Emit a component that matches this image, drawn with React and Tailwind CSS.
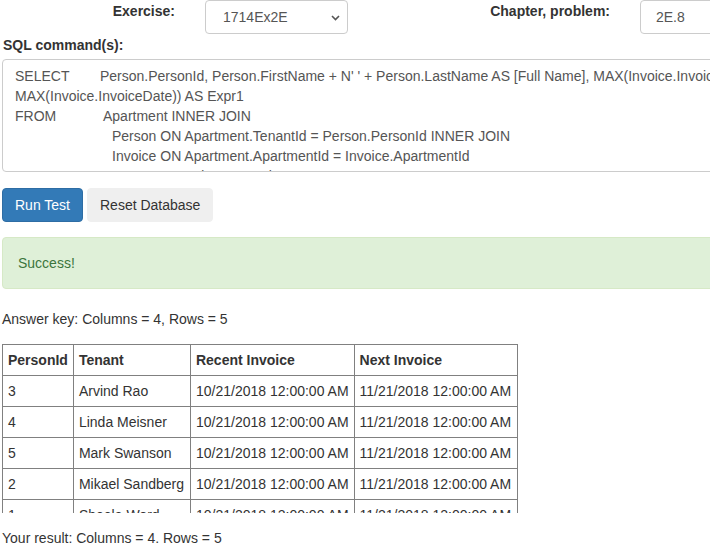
export default function App() {
  const rows = [
    ["3", "Arvind Rao"],
    ["4", "Linda Meisner"],
    ["5", "Mark Swanson"],
    ["2", "Mikael Sandberg"],
    ["1", "Sheela Word"],
  ];
  const cell = "border border-[#808080] pl-[5px] py-[5px] whitespace-nowrap text-left align-top";
  const p5 = " pr-[5px]";
  const p6 = " pr-[6px]";
  return (
    <div className="w-[710px] h-[543px] overflow-hidden bg-white text-[14px] leading-[20px] text-[#333] font-['Liberation_Sans',Arial,sans-serif]">
      <div className="w-[1000px] pl-[2px]">
        <div className="flex items-start h-[34px]">
          <div className="w-[173px] text-right font-bold pt-[1px]">Exercise:</div>
          <div className="relative ml-[30px] w-[143px] h-[34px] border border-[#ccc] rounded-[4px] flex items-center pl-[17px] text-[#555]">
            1714Ex2E
            <svg className="absolute right-[7px] top-[14px]" width="9" height="6" viewBox="0 0 9 6">
              <polyline points="1,1 4.5,4.5 8,1" fill="none" stroke="#555" strokeWidth="1.6" />
            </svg>
          </div>
          <div className="w-[262px] text-right font-bold pt-[1px]">Chapter, problem:</div>
          <div className="ml-[30px] w-[140px] h-[34px] border border-[#ccc] rounded-[4px] flex items-center pl-[15px] text-[#555]">
            2E.8
          </div>
        </div>
        <div className="mt-[1px] font-bold pl-[1px]">SQL command(s):</div>
        <div className="mt-[4px] w-[1000px] h-[113px] border border-[#ccc] rounded-[4px] pt-[6px] pl-[12px] overflow-hidden text-[#555] whitespace-nowrap">
          <div className="flex">
            <span className="w-[85px] shrink-0">SELECT</span>
            <span>Person.PersonId, Person.FirstName + N' ' + Person.LastName AS [Full Name], MAX(Invoice.InvoiceDate) AS [Recent Invoice], DATEADD(month, 1,</span>
          </div>
          <div>MAX(Invoice.InvoiceDate)) AS Expr1</div>
          <div className="flex">
            <span className="w-[88px] shrink-0">FROM</span>
            <span>Apartment INNER JOIN</span>
          </div>
          <div className="pl-[97px]">Person ON Apartment.TenantId = Person.PersonId INNER JOIN</div>
          <div className="pl-[97px]">Invoice ON Apartment.ApartmentId = Invoice.ApartmentId</div>
          <div className="flex">
            <span className="w-[85px] shrink-0">GROUP BY</span>
            <span>Person.PersonId, Person.FirstName + N' ' + Person.LastName</span>
          </div>
        </div>
        <div className="mt-[16px] flex gap-[4px]">
          <div className="h-[34px] px-[12px] flex items-center bg-[#337ab7] border border-[#2e6da4] text-white rounded-[4px]">Run Test</div>
          <div className="h-[34px] px-[12px] flex items-center bg-[#efefef] border border-[#efefef] text-[#333] rounded-[4px]">Reset Database</div>
        </div>
        <div className="mt-[15px] w-[900px] border border-[#d6e9c6] bg-[#dff0d8] text-[#3c763d] p-[15px] rounded-[4px]">Success!</div>
        <div className="mt-[20px]">Answer key: Columns = 4, Rows = 5</div>
        <div className="mt-[15px] h-[169px] overflow-hidden">
          <table className="border-collapse border border-[#808080]">
            <thead>
              <tr>
                <th className={cell + p5 + " font-bold"}>PersonId</th>
                <th className={cell + p6 + " font-bold"}>Tenant</th>
                <th className={cell + p5 + " font-bold"}>Recent Invoice</th>
                <th className={cell + p6 + " font-bold"}>Next Invoice</th>
              </tr>
            </thead>
            <tbody>
              {rows.map((r) => (
                <tr key={r[0]}>
                  <td className={cell + p5}>{r[0]}</td>
                  <td className={cell + p6}>{r[1]}</td>
                  <td className={cell + p5}>10/21/2018 12:00:00 AM</td>
                  <td className={cell + p6}>11/21/2018 12:00:00 AM</td>
                </tr>
              ))}
            </tbody>
          </table>
        </div>
        <div className="mt-[15px]">Your result: Columns = 4, Rows = 5</div>
      </div>
    </div>
  );
}
